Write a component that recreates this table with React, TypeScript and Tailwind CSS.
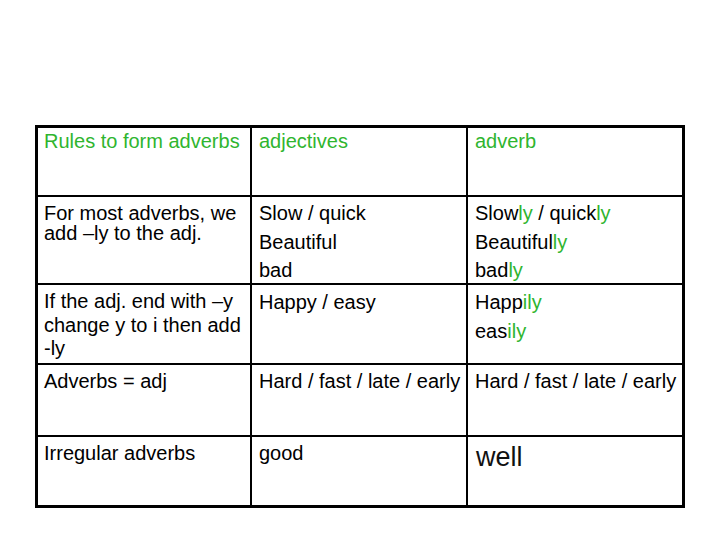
import React from "react";

const G = ({ children }: { children: React.ReactNode }) => (
  <span className="text-[#2fb52f]">{children}</span>
);

export default function App() {
  return (
    <div
      className="w-[720px] h-[540px] bg-white pt-[125px] pl-[35px] text-black"
      style={{ fontFamily: '"Liberation Sans", Arial, sans-serif' }}
    >
      <div className="w-[650px] border-[3px] border-black bg-black grid grid-cols-[212px_214px_214px] grid-rows-[67px_86px_78px_70px_68px] gap-[2px] text-[20px] whitespace-nowrap">
        {/* Row 1 */}
        <div className="bg-white pl-[6px] pt-[2px] leading-[23px] text-[#2fb52f]">Rules to form adverbs</div>
        <div className="bg-white pl-[7px] pt-[2px] leading-[23px] text-[#2fb52f]">adjectives</div>
        <div className="bg-white pl-[7px] pt-[2px] leading-[23px] text-[#2fb52f]">adverb</div>

        {/* Row 2 */}
        <div className="bg-white pl-[6px] pt-[6px] leading-[20px]">
          For most adverbs, we
          <br />
          add –ly to the adj.
        </div>
        <div className="bg-white pl-[7px] pt-[2px] leading-[28.5px]">
          <div>Slow / quick</div>
          <div>Beautiful</div>
          <div>bad</div>
        </div>
        <div className="bg-white pl-[7px] pt-[2px] leading-[28.5px]">
          <div>
            Slow<G>ly</G> / quick<G>ly</G>
          </div>
          <div>
            Beautiful<G>ly</G>
          </div>
          <div>
            bad<G>ly</G>
          </div>
        </div>

        {/* Row 3 */}
        <div className="bg-white pl-[6px] pt-[5px] leading-[23.5px]">
          If the adj. end with –y
          <br />
          change y to i then add
          <br />
          -ly
        </div>
        <div className="bg-white pl-[7px] pt-[2.5px] leading-[29px]">Happy / easy</div>
        <div className="bg-white pl-[7px] pt-[2.5px] leading-[29px]">
          <div>
            Happ<G>ily</G>
          </div>
          <div>
            eas<G>ily</G>
          </div>
        </div>

        {/* Row 4 */}
        <div className="bg-white pl-[6px] pt-[4.5px] leading-[23px]">Adverbs = adj</div>
        <div className="bg-white pl-[7px] pt-[4.5px] leading-[23px]">Hard / fast / late / early</div>
        <div className="bg-white pl-[7px] pt-[4.5px] leading-[23px]">Hard / fast / late / early</div>

        {/* Row 5 */}
        <div className="bg-white pl-[6px] pt-[4.5px] leading-[23px]">Irregular adverbs</div>
        <div className="bg-white pl-[7px] pt-[4.5px] leading-[23px]">good</div>
        <div className="bg-white pl-[8px] pt-[5px] leading-[31px] text-[27px] text-[#111]">well</div>
      </div>
    </div>
  );
}
